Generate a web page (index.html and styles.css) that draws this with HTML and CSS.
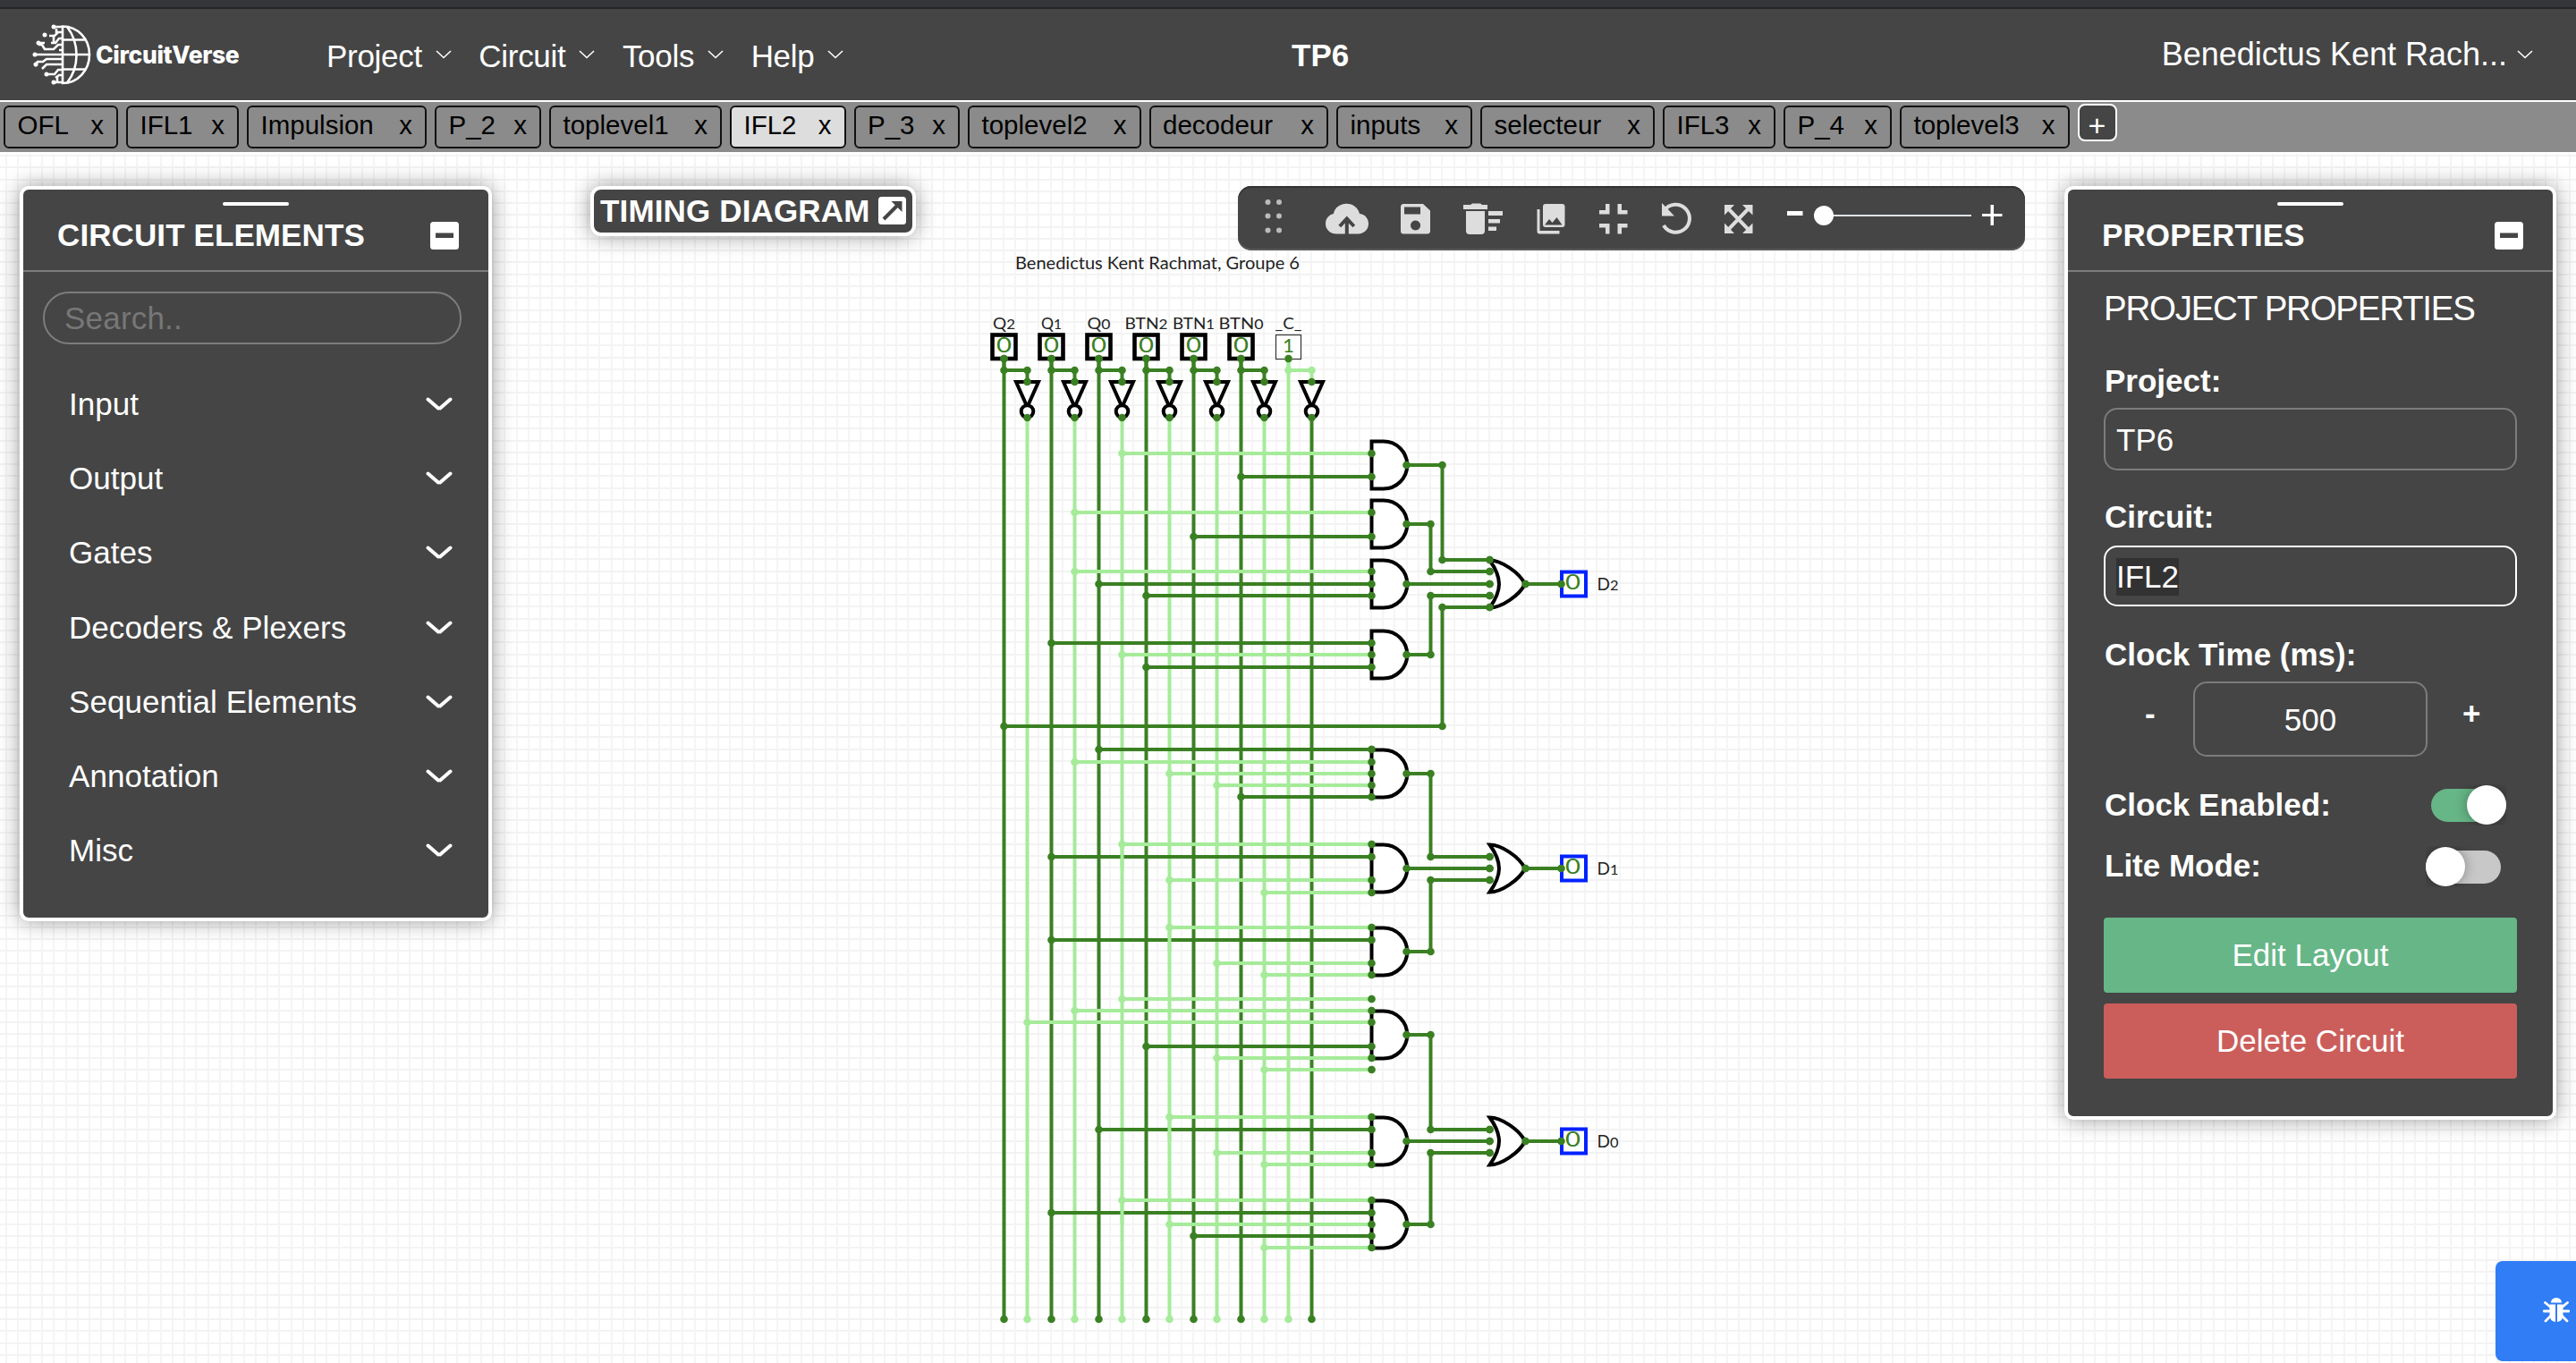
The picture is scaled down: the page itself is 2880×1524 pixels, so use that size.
FILE: index.html
```html
<!DOCTYPE html>
<html lang="en">
<head>
<meta charset="utf-8">
<title>CircuitVerse - TP6</title>
<link rel="stylesheet" href="styles.css">
</head>
<body>
<svg class="sprite" aria-hidden="true">
  <symbol id="chev" viewBox="0 0 18 10"><path d="M1 1l8 7.500 8-7.500" fill="none" stroke="currentColor" stroke-width="1.600"/></symbol>
  <symbol id="chev-bold" viewBox="0 0 30 16"><path d="M2.500 2.500L14 12.500M16 12.500L27.500 2.500" fill="none" stroke="currentColor" stroke-width="4" stroke-linecap="round"/></symbol>
  <symbol id="minus-box" viewBox="0 0 32 31"><rect width="32" height="31" rx="3.500" fill="#fff"/><rect x="6" y="12.500" width="20" height="5.500" fill="#454545"/></symbol>
</svg>

<div class="browser-edge"></div>
<header class="navbar">
  <a class="logo">
    <svg width="66" height="68" viewBox="36 27 66 68" fill="none" stroke="#fff" stroke-width="2.600">
      <path d="M70 29.500c17 0 30 14 30 31.500s-13 32-30 32z"/>
      <path d="M75 30c14 18 14 45 0 62.500M70 44.500h26M70 61h30M70 77.500h26"/>
      <path d="M69 30h-9M69 36h-4l-4 4h-6M69 43h-3l-4 5h-5M60 40v7M69 50h-4l-5 5h-10l-3-5h-4M69 56h-3M69 61H38M69 66H52l-4 3h-6l-3 5M69 72H52l-5 5M69 78h-4l-4 5h-7M69 84h-3l-4 3M69 92h-9M63 37v-5M64 86v5M50 48l-5 0"/>
      <g fill="#fff" stroke="none"><circle cx="60" cy="30" r="2.500"/><circle cx="50" cy="39" r="2.500"/><circle cx="43" cy="48" r="2.500"/><circle cx="39" cy="61" r="2.500"/><circle cx="40" cy="72" r="2.500"/><circle cx="52" cy="83" r="2.500"/><circle cx="60" cy="92" r="2.500"/></g>
    </svg>
    <span>CircuitVerse</span>
  </a>
  <nav class="menu">
    <a>Project<svg class="chev"><use href="#chev"/></svg></a>
    <a>Circuit<svg class="chev"><use href="#chev"/></svg></a>
    <a>Tools<svg class="chev"><use href="#chev"/></svg></a>
    <a>Help<svg class="chev"><use href="#chev"/></svg></a>
  </nav>
  <div class="project-name">TP6</div>
  <a class="user">Benedictus Kent Rach...<svg class="chev"><use href="#chev"/></svg></a>
</header>

<div class="tabs">
  <div class="tab"><span>OFL</span><span>x</span></div>
  <div class="tab"><span>IFL1</span><span>x</span></div>
  <div class="tab"><span>Impulsion</span><span>x</span></div>
  <div class="tab"><span>P_2</span><span>x</span></div>
  <div class="tab"><span>toplevel1</span><span>x</span></div>
  <div class="tab current"><span>IFL2</span><span>x</span></div>
  <div class="tab"><span>P_3</span><span>x</span></div>
  <div class="tab"><span>toplevel2</span><span>x</span></div>
  <div class="tab"><span>decodeur</span><span>x</span></div>
  <div class="tab"><span>inputs</span><span>x</span></div>
  <div class="tab"><span>selecteur</span><span>x</span></div>
  <div class="tab"><span>IFL3</span><span>x</span></div>
  <div class="tab"><span>P_4</span><span>x</span></div>
  <div class="tab"><span>toplevel3</span><span>x</span></div>
  <button class="new-tab">+</button>
</div>

<main class="workspace">
  <svg id="circuit" width="2880" height="1354" viewBox="0 170 2880 1354"></svg>

  <section class="panel elements">
    <div class="panel-head"><i class="grip"></i><h2>CIRCUIT ELEMENTS</h2><svg class="min"><use href="#minus-box"/></svg></div>
    <div class="search">Search..</div>
    <ul class="categories">
      <li>Input<svg><use href="#chev-bold"/></svg></li>
      <li>Output<svg><use href="#chev-bold"/></svg></li>
      <li>Gates<svg><use href="#chev-bold"/></svg></li>
      <li>Decoders &amp; Plexers<svg><use href="#chev-bold"/></svg></li>
      <li>Sequential Elements<svg><use href="#chev-bold"/></svg></li>
      <li>Annotation<svg><use href="#chev-bold"/></svg></li>
      <li>Misc<svg><use href="#chev-bold"/></svg></li>
    </ul>
  </section>

  <section class="timing">
    <span>TIMING DIAGRAM</span>
    <svg width="31" height="31" viewBox="0 0 31 31"><rect width="31" height="31" rx="3.500" fill="#fff"/><path d="M6 25L21 10" stroke="#454545" stroke-width="4"/><path d="M14.500 5H26.500V17z" fill="#454545"/></svg>
  </section>

  <section class="toolbar">
    <svg width="880" height="72" viewBox="1384 208 880 72" fill="#ddd">
      <g fill="#bbb"><circle cx="1417.500" cy="226" r="3"/><circle cx="1430" cy="226" r="3"/><circle cx="1417.500" cy="241.500" r="3"/><circle cx="1430" cy="241.500" r="3"/><circle cx="1417.500" cy="257.500" r="3"/><circle cx="1430" cy="257.500" r="3"/></g>
      <path d="M1494 261.500c-7 0-12-5-12-11.500 0-5.500 4-10 9-11 1-6.500 7-11 14-11.200 7.500-.2 13.500 4.500 15 11.200 6 .5 10 5.500 10 11.200 0 6.300-5 11.300-11.500 11.300z"/>
      <path d="M1505.800 262v-16m-8 7l8-8.500 8 8.500" fill="none" stroke="#454545" stroke-width="4"/>
      <path fill-rule="evenodd" d="M1569 228h22l8 7.500V258q0 3.500-3.500 3.500h-26.500q-3 0-3-3.500V231.500q0-3.500 3-3.500zm1 3.500v8h18v-8zm12.500 15a5.500 5.500 0 1 0 .1 0z"/>
      <path d="M1636 229h8l2-1.500h9l2 1.500h6v5h-27zM1639 236h21v22q0 4-4 4h-13q-4 0-4-4zM1664 236h16v5h-16zM1664 245h13v4.500h-13zM1664 253.500h9v4.500h-9z"/>
      <path fill-rule="evenodd" d="M1728 228h18.500q3 0 3 3v20q0 3-3 3H1728q-3 0-3-3v-20q0-3 3-3zm-1 23.500h19.500l-6-8.500-5 6-3.500-4z"/>
      <path d="M1718.500 234h3v24h22v3.500h-22q-3 0-3-3z"/>
      <path d="M1795 228h4.500v11.500H1788V235h7zM1808.500 228h4.500v7h6.500v4.500h-11zM1788 250h11.500v11.500H1795v-7h-7zM1808.500 250h11v4.500h-6.500v7h-4.500z"/>
      <path d="M1861 235a15.500 15.500 0 1 1-1 17" fill="none" stroke="#ddd" stroke-width="4"/><path d="M1858 227l14 14.500h-14z"/>
      <path d="M1931 232l25 26M1956 232l-25 26" stroke="#ddd" stroke-width="4"/><path d="M1928 229h11l-11 11.500zM1959.500 229v11.500L1948 229zM1928 261v-11.500l11 11.500zM1959.500 261H1948l11.500-11.500z"/>
      <g fill="#fff"><path d="M1998 236h17.500v5H1998zM2216 239h22.500v3H2216zM2225.500 229h3.500v23h-3.500z"/><path d="M2040 240h164v2h-164z" fill="#dee2e6"/><circle cx="2039" cy="241" r="11"/></g>
    </svg>
  </section>

  <section class="panel properties">
    <div class="panel-head"><i class="grip"></i><h2>PROPERTIES</h2><svg class="min"><use href="#minus-box"/></svg></div>
    <div class="props">
      <div class="props-title">PROJECT PROPERTIES</div>
      <label class="lbl-project">Project:</label>
      <div class="field">TP6</div>
      <label class="lbl-circuit">Circuit:</label>
      <div class="field focus"><mark>IFL2</mark></div>
      <label class="lbl-clock">Clock Time (ms):</label>
      <div class="clock"><b>-</b><div class="field num">500</div><b>+</b></div>
      <div class="switch-row"><label>Clock Enabled:</label><i class="switch on"></i></div>
      <div class="switch-row lite"><label>Lite Mode:</label><i class="switch"></i></div>
      <button class="btn green">Edit Layout</button>
      <button class="btn red">Delete Circuit</button>
    </div>
  </section>

  <div class="report">
    <svg width="30" height="30" viewBox="0 0 30 30" fill="#fff"><path d="M9 6.500a6 5.500 0 0 1 12 0zM7.500 8.500h6.500V28q-6.500-1-6.500-8zM16 8.500h6.500V20q0 7-6.500 8z"/><path d="M2.500 6.500l6 5M1 16h7M3 27l6-6M27.500 6.500l-6 5M29 16h-7M27 27l-6-6" stroke="#fff" stroke-width="2.800" stroke-linecap="round"/></svg>
  </div>
</main>
<script src="circuit.js"></script>
</body>
</html>
```

FILE: styles.css
```css
* { box-sizing: border-box; }
html, body { margin: 0; height: 100%; overflow: hidden; }
body {
  width: 2880px;
  height: 1524px;
  background: #fff;
  color: #fff;
  font: 35px/40px "Liberation Sans", Arial, sans-serif;
  display: flex;
  flex-direction: column;
}
.sprite { display: none; }

.browser-edge { height: 10px; flex: none; background: #35363a; border-bottom: 2px solid #262626; }

.navbar {
  height: 104px;
  flex: none;
  display: grid;
  grid-template-columns: 364px 1080px 64px 1fr;
  align-items: center;
  background: #454545;
  border-bottom: 2px solid #fff;
  padding-right: 48px;
}
.logo { display: flex; align-items: center; gap: 5px; padding-left: 36px; }
.logo span { font: 800 26.5px/30px Inter, "Open Sans", sans-serif; letter-spacing: -0.35px; }
.menu { display: flex; gap: 30.5px; padding: 3px 0 0 1px; }
.menu a { display: flex; align-items: center; letter-spacing: -0.3px; }
.chev { width: 18px; height: 10px; margin-left: 15px; }
.menu .chev { margin-top: -3px; }
.project-name { font-weight: bold; white-space: nowrap; padding-top: 2px; }
.user { justify-self: end; display: flex; align-items: center; white-space: nowrap; font-size: 36px; }
.user .chev { margin-left: 11px; }

.tabs {
  height: 56px;
  flex: none;
  background: #8b8b8b;
  padding: 4px 0 4px 4px;
  display: grid;
  grid-template-columns: 128px 126px 201px 119px 193px 129.5px 118.5px 193.5px 200.5px 152px 195px 126px 121px 189.5px 44px;
  column-gap: 9px;
  color: #000;
}
.tab {
  display: flex;
  justify-content: space-between;
  align-items: center;
  height: 48px;
  border: 2px solid #111;
  border-radius: 6px;
  padding: 0 14px 5px 13.5px;
  font-size: 29.5px;
}
.tab.current { background: #ddd; }
.new-tab {
  width: 44px;
  height: 42px;
  margin-top: -2px;
  border: 2px solid #fff;
  border-radius: 8px;
  background: #454545;
  color: #fff;
  font: 34px/40px "Liberation Sans", Arial, sans-serif;
  padding: 2px 0 0;
}

.workspace { position: relative; height: 1354px; flex: none; overflow: hidden; }
#circuit { display: block; font-family: Lato, "Open Sans", sans-serif; }

.panel {
  position: absolute;
  top: 38px;
  background: #454545;
  border: 4px solid #fff;
  border-radius: 10px;
  box-shadow: 0 0 24px rgba(0, 0, 0, .4);
}
.elements { left: 22px; width: 528px; height: 822px; }
.properties { left: 2308px; width: 550px; height: 1044px; }
.panel-head {
  position: relative;
  height: 92px;
  display: flex;
  align-items: center;
  justify-content: space-between;
  padding: 12px 33px 0 38px;
  border-bottom: 2px solid #7c7c7c;
}
.panel-head h2 { margin: 0; font-size: 35px; line-height: 40px; white-space: nowrap; letter-spacing: .1px; }
.grip {
  position: absolute;
  top: 14px;
  left: calc(50% - 37px);
  width: 74px;
  height: 4px;
  border-radius: 2px;
  background: #fff;
}
.min { width: 32px; height: 31px; }

.search {
  margin: 22px 30px 25px 22px;
  height: 59px;
  border: 2px solid #7c7c7c;
  border-radius: 29px;
  padding: 8px 22px;
  color: #777;
  letter-spacing: .2px;
}
.categories { list-style: none; margin: 0; padding: 0 40px 0 51px; }
.categories li { display: flex; justify-content: space-between; align-items: center; height: 83.3px; letter-spacing: .05px; }
.categories svg { width: 30px; height: 16px; }

.timing {
  position: absolute;
  left: 660px;
  top: 38px;
  width: 364px;
  height: 56px;
  display: flex;
  align-items: center;
  justify-content: space-between;
  padding: 0 7px;
  background: #454545;
  border: 4px solid #fff;
  border-radius: 12px;
  box-shadow: 0 0 24px rgba(0, 0, 0, .4);
  font-weight: bold;
  white-space: nowrap;
  letter-spacing: .15px;
}
.timing svg { margin-top: -2px; }

.toolbar {
  position: absolute;
  left: 1384px;
  top: 38px;
  width: 880px;
  height: 72px;
  background: #454545;
  border-radius: 15px;
  box-shadow: inset 0 2px #333, inset 0 -2px #5a5a5a;
}

.props { padding: 0 40px; display: flex; flex-direction: column; }
.props-title { margin: 19px 0 0 0; font-size: 38.5px; line-height: 44px; white-space: nowrap; letter-spacing: -1.25px; }
label { font-weight: bold; padding-left: 1px; white-space: nowrap; }
.lbl-project { margin-top: 39px; }
.lbl-circuit { margin-top: 32px; }
.lbl-clock { margin-top: 34px; }
.field {
  height: 70px;
  margin-top: 10px;
  border: 2px solid #7c7c7c;
  border-radius: 15px;
  padding: 14px 12px;
}
.field.focus { height: 68px; margin-top: 12px; border-color: #fff; padding: 12px; }
mark { display: inline-block; height: 42px; line-height: 42px; background: #323232; color: #fff; }
.clock { display: flex; justify-content: space-between; }
.clock b { width: 100px; padding-left: 46px; padding-top: 26px; }
.clock b:last-child { padding-left: 39px; }
.field.num { width: 262px; height: 84px; margin-top: 10px; padding: 21px 0; text-align: center; }
.switch-row { display: flex; align-items: center; justify-content: space-between; height: 44px; margin-top: 32px; padding-right: 12px; }
.switch-row.lite { margin-top: 25px; padding-right: 18px; }
.switch-row.lite label { margin-top: -3px; }
.switch { position: relative; width: 84px; height: 37px; border-radius: 19px; background: #c8c8c8; clip-path: inset(-4px 0 -4px 0); }
.switch::before {
  content: "";
  position: absolute;
  left: 0;
  top: -3.5px;
  width: 44px;
  height: 44px;
  border-radius: 50%;
  background: #fff;
  box-shadow: 0 0 14px rgba(0, 0, 0, .35);
}
.switch.on { background: #66b687; }
.switch.on::before { left: 40px; }
.btn {
  height: 84px;
  margin-top: 12px;
  border: 0;
  border-radius: 4px;
  color: #fff;
  font: 35px/40px "Liberation Sans", Arial, sans-serif;
  padding: 0;
}
.btn.green { background: #66b687; margin-top: 35px; }
.btn.red { background: #cb5e5b; }

.report {
  position: absolute;
  right: 0;
  top: 1240px;
  width: 90px;
  height: 112px;
  border-radius: 8px 0 0 8px;
  background: #307df5;
  padding: 38px 0 0 53px;
}
```

FILE: circuit.js
```javascript
// Draws the circuit. Coordinates are grid units; UX and UY are the grid pitch in pixels.
const UX = 13.25, UY = 13.26, X0 = 1122.5, Y0 = 400.8;
const DARK = '#3a8023', LIGHT = '#a6eb9a';
const px = u => Math.floor(X0 + u * UX - 0.1) + 0.5;
const py = u => Math.round(Y0 + u * UY);
let out = '';

const line = (x1, y1, x2, y2, c) =>
  out += `<path d="M${px(x1)} ${py(y1)}L${px(x2)} ${py(y2)}" stroke="${c}" stroke-width="4"/>`;
const dot = (x, y, c) => out += `<circle cx="${px(x)}" cy="${py(y)}" r="4.3" fill="${c}"/>`;
const wire = (pts, c) => {
  for (let i = 1; i < pts.length; i++) line(...pts[i - 1], ...pts[i], c);
  pts.forEach(p => dot(...p, c));
};
const text = (x, y, s, w, size, fill, anchor) =>
  out += `<text x="${x}" y="${y}" font-size="${size}" fill="${fill}" text-anchor="${anchor}" textLength="${w}" lengthAdjust="spacingAndGlyphs">${s}</text>`;
const small = s => `<tspan font-size="16">${s}</tspan>`;

// background grid
for (let x = 7.2; x < 2880; x += 13.266) out += `<rect x="${Math.round(x) - 1}" y="172" width="2" height="1352" fill="#f5f5f5"/>`;
for (let y = 174; y < 1524; y += 13.275) out += `<rect x="0" y="${Math.round(y) - 1}" width="2880" height="2" fill="#f3f3f3"/>`;

// vertical rails
for (let n = 0; n < 7; n++) {
  const on = n === 6, c = n * 4;
  line(c, 0, c, 81, on ? LIGHT : DARK);
  line(c + 2, 5, c + 2, 81, on ? DARK : LIGHT);
  dot(c, 81, on ? LIGHT : DARK);
  dot(c + 2, 81, on ? DARK : LIGHT);
}

// AND gates: centre row and inputs as [column, row, is high]
const ands = [
  [9, [[10, 8, 1], [20, 10, 0]]],
  [14, [[6, 13, 1], [16, 15, 0]]],
  [19, [[6, 18, 1], [8, 19, 0], [12, 20, 0]]],
  [25, [[4, 24, 0], [10, 25, 1], [12, 26, 0]]],
  [35, [[8, 33, 0], [6, 34, 1], [14, 35, 1], [18, 36, 1], [20, 37, 0]]],
  [43, [[10, 41, 1], [4, 42, 0], [14, 44, 1], [22, 45, 1]]],
  [50, [[14, 48, 1], [4, 49, 0], [18, 51, 1], [22, 52, 1]]],
  [57, [[10, 54, 1], [6, 55, 1], [2, 56, 1], [12, 58, 0], [18, 59, 1], [22, 60, 1]]],
  [66, [[14, 64, 1], [8, 65, 0], [18, 67, 1], [22, 68, 1]]],
  [73, [[10, 71, 1], [4, 72, 0], [14, 73, 1], [16, 74, 0], [22, 75, 1]]]
];
ands.forEach(([, ins]) => ins.forEach(([c, r, hi]) => wire([[c, r], [31, r]], hi ? LIGHT : DARK)));
[[10, 41, 43], [14, 48, 50], [14, 64, 66], [10, 71, 73]].forEach(([c, a, b]) => line(c, a, c, b, LIGHT));

// connections to the OR gates
[
  [[34, 9], [37, 9], [37, 17], [41, 17]],
  [[34, 14], [36, 14], [36, 18], [41, 18]],
  [[34, 19], [41, 19]],
  [[34, 25], [36, 25], [36, 20], [41, 20]],
  [[0, 31], [37, 31], [37, 21], [41, 21]],
  [[34, 35], [36, 35], [36, 42], [41, 42]],
  [[34, 43], [41, 43]],
  [[34, 50], [36, 50], [36, 44], [41, 44]],
  [[34, 57], [36, 57], [36, 65], [41, 65]],
  [[34, 66], [41, 66]],
  [[34, 73], [36, 73], [36, 67], [41, 67]],
  [[44, 19], [47, 19]], [[44, 43], [47, 43]], [[44, 66], [47, 66]]
].forEach(p => wire(p, DARK));

ands.forEach(([r, ins]) => {
  const x = px(31), y = py(r), h = 26.5;
  out += `<path d="M${x} ${y - h}h13.25a26.5 26.5 0 0 1 0 53h-13.25z" fill="#fff" stroke="#000" stroke-width="4"/>`;
  ins.forEach(([, row]) => dot(31, row, DARK));
  dot(34, r, DARK);
});

[[19, 'D', '2', [17, 18, 19, 20, 21]], [43, 'D', '1', [42, 43, 44]], [66, 'D', '0', [65, 66, 67]]].forEach(([r, a, b, ins]) => {
  const x = px(42), y = py(r);
  out += `<path d="M${x - 13} ${y - 26.5}C${x} ${y - 26.5} ${x + 20} ${y - 13} ${x + 26.5} ${y}C${x + 20} ${y + 13} ${x} ${y + 26.5} ${x - 13} ${y + 26.5}C${x + 1} ${y + 7} ${x + 1} ${y - 7} ${x - 13} ${y - 26.5}z" fill="#fff" stroke="#000" stroke-width="4"/>`;
  ins.forEach(row => dot(41, row, DARK));
  dot(44, r, DARK);
  out += `<rect x="1746" y="${y - 13.5}" width="27" height="27" fill="#fff" stroke="#0022ff" stroke-width="4"/>`;
  dot(47, r, DARK);
  text(1758.5, y + 5.5, '0', 17, 22.5, DARK, 'middle');
  text(1785.5, y + 6.5, a + small(b), 24, 18.5, '#222', 'start');
});

// inputs with their inverters
[['Q', '2', 25], ['Q', '1', 23], ['Q', '0', 26], ['BTN', '2', 48], ['BTN', '1', 47], ['BTN', '0', 50]].forEach(([a, b, w], n) => {
  const x = px(n * 4);
  text(x, 367.5, a + small(b), w, 18, '#222', 'middle');
  out += `<rect x="${x - 13}" y="374.5" width="26" height="26.5" fill="#fff" stroke="#000" stroke-width="4.6"/>`;
  text(x, 393.5, '0', 17, 22.5, DARK, 'middle');
});
text(px(24), 367.5, '_C_', 30, 18, '#222', 'middle');
out += `<rect x="${px(24) - 14}" y="374.5" width="28" height="27" fill="#fff" stroke="#333" stroke-width="1.2"/>`;
text(px(24), 393.5, '1', 13, 22, DARK, 'middle');

for (let n = 0; n < 7; n++) {
  const c = n * 4, x = px(c + 2), col = n === 6 ? LIGHT : DARK;
  wire([[c, 0], [c, 1], [c + 2, 1], [c + 2, 2]], col);
  out += `<path d="M${x - 12.5} 427h25L${x} 455z" fill="#fff" stroke="#000" stroke-width="4"/>`;
  out += `<circle cx="${x}" cy="460" r="6.8" fill="#fff" stroke="#000" stroke-width="4"/>`;
  dot(c, 0, DARK);
  dot(c + 2, 2, DARK);
  dot(c + 2, 5, DARK);
}
text(1135, 301, 'Benedictus Kent Rachmat, Groupe 6', 318, 18.5, '#222', 'start');

document.getElementById('circuit').innerHTML = out;
```
